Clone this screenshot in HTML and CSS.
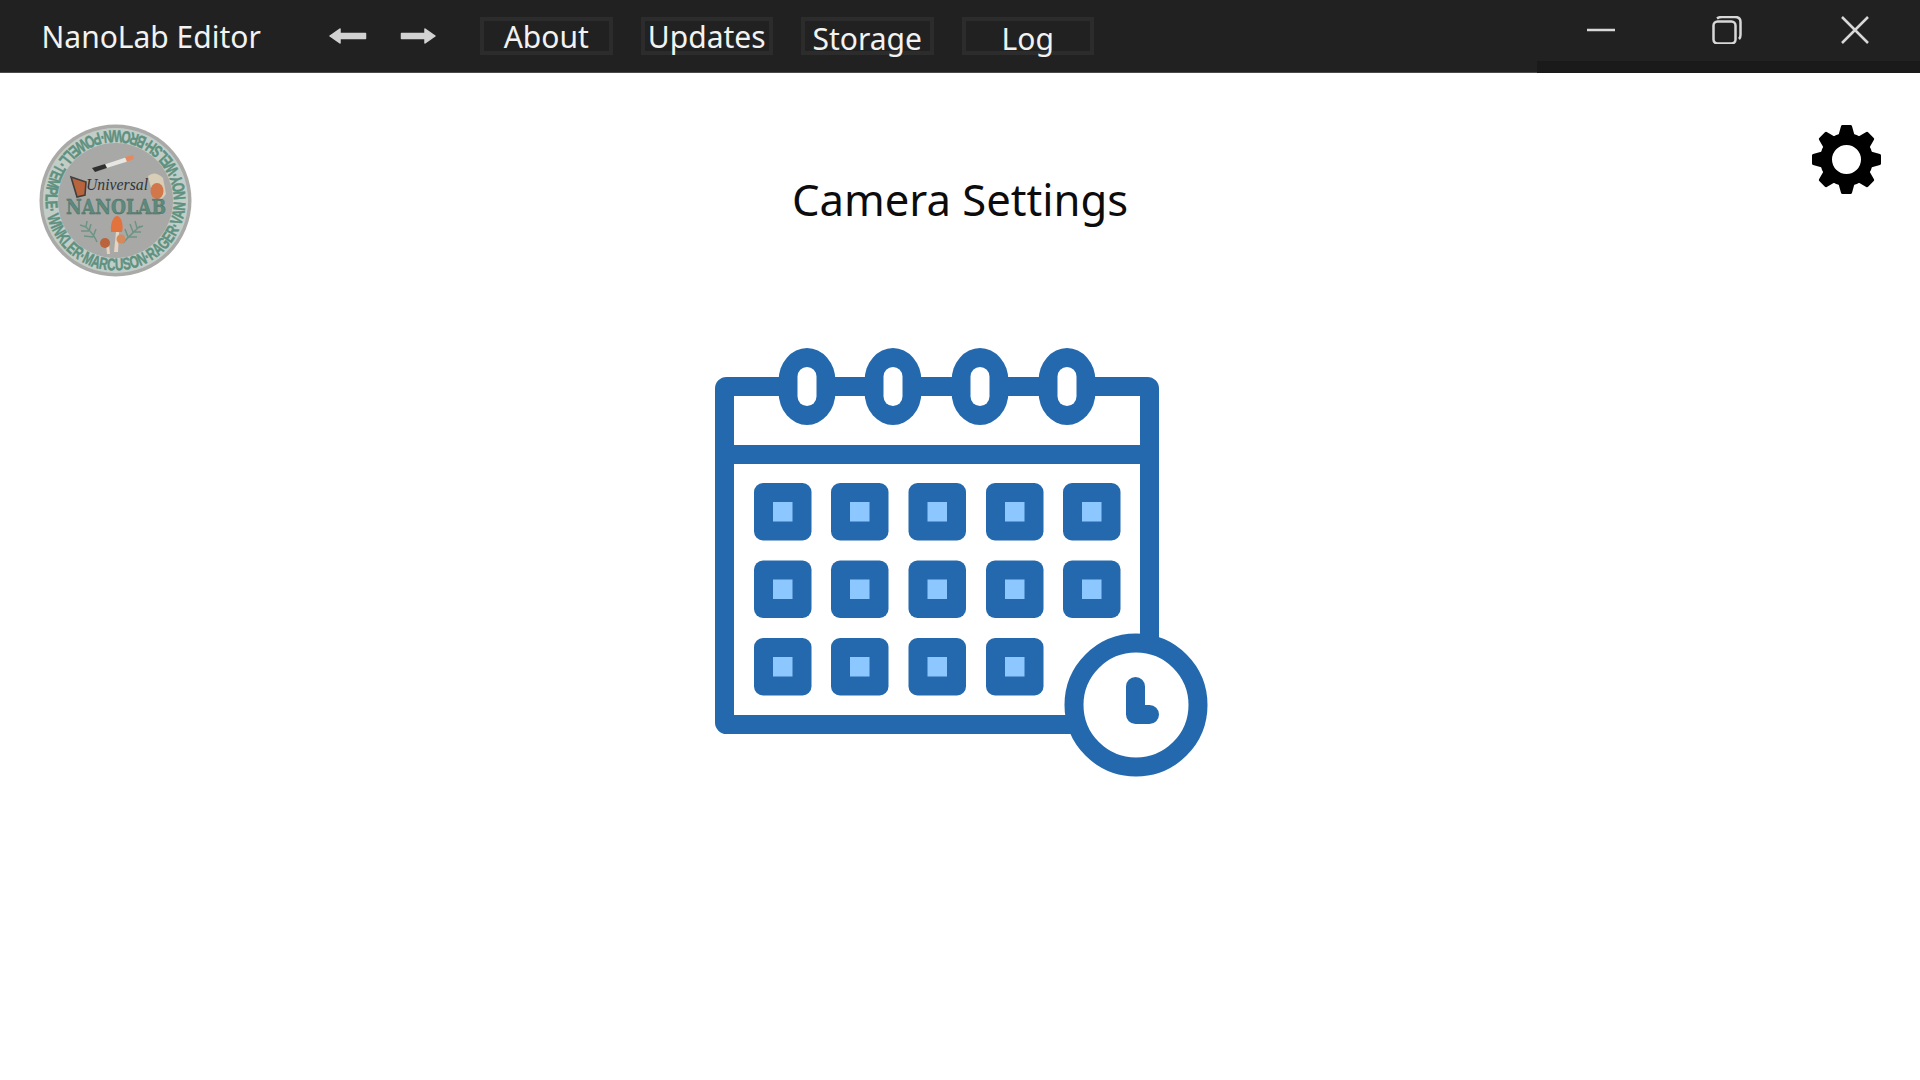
FILE: index.html
```html
<!DOCTYPE html>
<html lang="en">
<head>
<meta charset="utf-8">
<title>NanoLab Editor</title>
<link rel="stylesheet" href="styles.css">
</head>
<body>
<div class="app">
  <header class="titlebar">
    <div class="app-name">NanoLab Editor</div>
    <div class="arrows">
      <svg class="arrow" width="38" height="18" viewBox="0 0 38 18"><path d="M1 9 L11 2 V6.500 H36.500 V11.500 H11 V16 Z"/></svg>
      <svg class="arrow" width="36" height="18" viewBox="0 0 36 18"><path d="M35 9 L25 2 V6.500 H1.500 V11.500 H25 V16 Z"/></svg>
    </div>
    <nav class="nav">
      <div class="nav-btn">About</div>
      <div class="nav-btn">Updates</div>
      <div class="nav-btn nav-btn-low">Storage</div>
      <div class="nav-btn nav-btn-low">Log</div>
    </nav>
    <div class="win-controls">
      <svg width="28" height="28" viewBox="0 0 28 28" class="win-icon"><path d="M0 14 H28" /></svg>
      <svg width="30" height="28" viewBox="0 0 30 28" class="win-icon"><rect x="1.500" y="5.500" width="22" height="22" rx="4"/><path d="M5 2.500 Q7 1 10 1 H23 Q28.500 1 28.500 6 V19 Q28.500 21.500 27 23"/></svg>
      <svg width="28" height="28" viewBox="0 0 28 28" class="win-icon win-close"><path d="M1 1 L27 27 M27 1 L1 27"/></svg>
    </div>
  </header>
  <main class="content">
    <div class="head-row">
      <svg class="logo" width="153" height="153" viewBox="0 0 153 153">
        <defs>
          <path id="ringPath" d="M8.240 92 A70 70 0 1 0 8.240 61 A70 70 0 0 0 8.240 92"/>
        </defs>
        <circle cx="76.500" cy="76.500" r="76" fill="#a9a9a7"/>
        <circle cx="76.500" cy="76.500" r="72.500" fill="#c3cdc7"/>
        <circle cx="76.500" cy="76.500" r="57.500" fill="#a8a9a7"/>
        <text class="logo-ring"><textPath href="#ringPath" textLength="436" lengthAdjust="spacingAndGlyphs">WINKLER·MARCUSON·RAGER·VAN NOY·WELSH·BROWN·POWELL·TEMPLE·</textPath></text>
        <g stroke="#6f9484" stroke-width="1.500" fill="none">
          <path d="M58 118 C55 110 50 106 46 102 M54 113 L45 112 M54 113 L57 105 M50 107 L42 107 M50 107 L52 100 M47 103 L41 101 M47 103 L48 97"/>
          <path d="M84 119 C90 112 96 107 101 102 M89 113 L98 113 M89 113 L86 105 M94 108 L102 108 M94 108 L91 100 M98 104 L104 102 M98 104 L96 97"/>
        </g>
        <path d="M55 44 L88 33 L90 37 L58 47 Z" fill="#e6e6e2"/>
        <path d="M53 44 L66 40 L68 44 L56 48 Z" fill="#2f2f2f"/>
        <path d="M86 33 L94 31 L95 35 L88 38 Z" fill="#e48a62"/>
        <path d="M109 52 Q116 46 124 54 L127 70 Q122 78 115 76 Z" fill="#d8cdb6"/>
        <ellipse cx="118" cy="67" rx="6.500" ry="8" fill="#d2764b"/>
        <path d="M32 53 L47 58 L46 71 L38 73 L35 63 Z" fill="#b9643d" stroke="#3f3f3f" stroke-width="1.600"/>
        <text class="logo-script" x="47" y="66" textLength="62" lengthAdjust="spacingAndGlyphs">Universal</text>
        <text class="logo-name" x="27" y="90" textLength="100" lengthAdjust="spacingAndGlyphs">NANOLAB</text>
        <path d="M77 108 L75 128 H79 L80 108 Z M67 120 L68 130 H71 L70 120 Z" fill="#e6d3c0"/>
        <path d="M72 108 C71 98 75 92 78 92 C82 92 85 100 83 108 Z" fill="#e2733f"/>
        <circle cx="66" cy="119" r="5" fill="#b9643d"/>
        <circle cx="82" cy="115" r="4.500" fill="#d68a5c"/>
      </svg>
      <h1 class="page-title">Camera Settings</h1>
      <svg class="gear" width="69" height="69" viewBox="-34.500 -34.500 69 69">
        <circle r="20.500" class="gear-ring"/>
        <g class="gear-teeth">
          <path d="M-6.500 -24 L-4 -33 H4 L6.500 -24 Z"/>
          <path d="M-6.500 -24 L-4 -33 H4 L6.500 -24 Z" transform="rotate(45)"/>
          <path d="M-6.500 -24 L-4 -33 H4 L6.500 -24 Z" transform="rotate(90)"/>
          <path d="M-6.500 -24 L-4 -33 H4 L6.500 -24 Z" transform="rotate(135)"/>
          <path d="M-6.500 -24 L-4 -33 H4 L6.500 -24 Z" transform="rotate(180)"/>
          <path d="M-6.500 -24 L-4 -33 H4 L6.500 -24 Z" transform="rotate(225)"/>
          <path d="M-6.500 -24 L-4 -33 H4 L6.500 -24 Z" transform="rotate(270)"/>
          <path d="M-6.500 -24 L-4 -33 H4 L6.500 -24 Z" transform="rotate(315)"/>
        </g>
      </svg>
    </div>
    <svg class="calendar" width="500" height="440" viewBox="710 340 500 440">
      <defs>
        <g id="day">
          <rect width="57.500" height="57.500" rx="9" class="cal-blue"/>
          <rect x="19" y="19" width="19.500" height="19.500" class="cal-light"/>
        </g>
        <g id="ring">
          <rect x="-28.500" y="348" width="57" height="77" rx="28.500" ry="33" class="cal-blue"/>
          <rect x="-9.500" y="367" width="19" height="39" rx="9.500" class="cal-white"/>
        </g>
      </defs>
      <rect x="724.500" y="386.500" width="425" height="338" rx="2" class="cal-line"/>
      <rect x="715" y="445" width="444" height="19" class="cal-blue"/>
      <use href="#ring" x="807"/>
      <use href="#ring" x="893"/>
      <use href="#ring" x="980"/>
      <use href="#ring" x="1067"/>
      <use href="#day" x="754" y="483"/>
      <use href="#day" x="831" y="483"/>
      <use href="#day" x="908.500" y="483"/>
      <use href="#day" x="986" y="483"/>
      <use href="#day" x="1063" y="483"/>
      <use href="#day" x="754" y="560.500"/>
      <use href="#day" x="831" y="560.500"/>
      <use href="#day" x="908.500" y="560.500"/>
      <use href="#day" x="986" y="560.500"/>
      <use href="#day" x="1063" y="560.500"/>
      <use href="#day" x="754" y="638"/>
      <use href="#day" x="831" y="638"/>
      <use href="#day" x="908.500" y="638"/>
      <use href="#day" x="986" y="638"/>
      <circle cx="1136" cy="705" r="62" class="cal-clock"/>
      <path d="M1135.500 686.500 V714.500 H1149.500" class="cal-hand"/>
    </svg>
  </main>
</div>
</body>
</html>
```
FILE: styles.css
```css
* { box-sizing: border-box; }
html, body { margin: 0; height: 100%; background: #fff; }
body { font-family: "Noto Sans", "Open Sans", sans-serif; overflow: hidden; }
.app { display: flex; flex-direction: column; height: 100vh; }

.titlebar {
  position: relative;
  display: flex;
  align-items: flex-start;
  height: 73px;
  flex: none;
  padding-left: 41.500px;
  background: #212121;
  border-bottom: 1px solid #4a4a4a;
}
.titlebar::after {
  content: "";
  position: absolute;
  right: 0;
  bottom: -1px;
  width: 383px;
  height: 12px;
  background: #1a1a1a;
}
.app-name {
  width: 287.500px;
  padding-top: 15px;
  font-size: 30px;
  line-height: 44px;
  color: #f2f2f2;
}
.arrows { display: flex; gap: 33px; width: 151px; padding-top: 27px; }
.arrow { display: block; fill: #d2d2d2; stroke: #d2d2d2; stroke-width: 1.500px; stroke-linejoin: round; }
.nav { display: flex; gap: 28px; padding-top: 17px; }
.nav-btn {
  width: 132.500px;
  height: 38px;
  border: 4px solid #2c2c2c;
  font-size: 30px;
  line-height: 31px;
  text-align: center;
  color: #f2f2f2;
}
.nav-btn-low { line-height: 35px; }
.win-controls {
  display: flex;
  position: absolute;
  top: 16px;
  left: 1587px;
  gap: 97px;
  z-index: 1;
}
.win-icon { display: block; fill: none; stroke: #d8d8d8; stroke-width: 2.500px; }
.win-close { margin-left: 2px; }

.content { flex: 1; display: flex; flex-direction: column; align-items: center; }
.head-row {
  display: grid;
  grid-template-columns: 1fr auto 1fr;
  align-items: center;
  width: 100%;
  padding: 51px 39px 0;
}
.logo { display: block; }
.logo-ring { font: 700 17px "Liberation Sans", sans-serif; fill: #5f9180; stroke: #5f9180; stroke-width: .5px; }
.logo-script { font: italic 400 17px "Liberation Serif", serif; fill: #333; }
.logo-name { font: 700 21px "DejaVu Serif", serif; fill: #5d8a7c; stroke: #42695d; stroke-width: .4px; }
.page-title {
  margin: 0 0 4px;
  font-size: 43.600px;
  font-weight: 400;
  line-height: 60px;
  color: #0c0c0c;
}
.gear { display: block; justify-self: end; align-self: start; margin-top: 1px; }
.gear-ring { fill: none; stroke: #000; stroke-width: 12px; }
.gear-teeth { fill: #000; stroke: #000; stroke-width: 3px; stroke-linejoin: round; }

.calendar { display: block; margin-top: 63px; flex: none; }
.cal-blue { fill: #2469ae; }
.cal-light { fill: #8cc8ff; }
.cal-white { fill: #fff; }
.cal-line { fill: none; stroke: #2469ae; stroke-width: 19px; stroke-linejoin: round; }
.cal-clock { fill: #fff; stroke: #2469ae; stroke-width: 19px; }
.cal-hand { fill: none; stroke: #2469ae; stroke-width: 19px; stroke-linecap: round; stroke-linejoin: round; }
```
